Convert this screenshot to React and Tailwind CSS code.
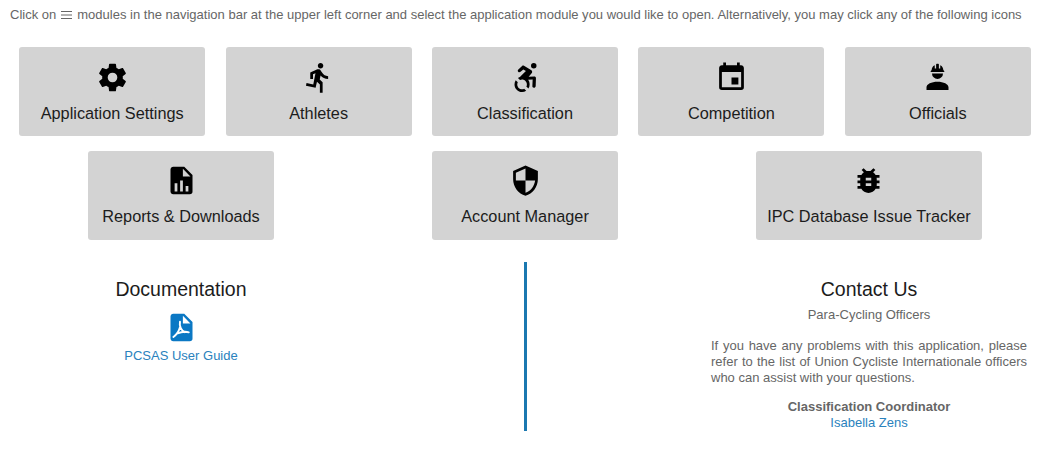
import React from "react";

const icons = {
  cog: "M12,15.5A3.5,3.5 0 0,1 8.5,12A3.5,3.5 0 0,1 12,8.5A3.5,3.5 0 0,1 15.5,12A3.5,3.5 0 0,1 12,15.5M19.43,12.97C19.47,12.65 19.5,12.33 19.5,12C19.5,11.67 19.47,11.34 19.43,11L21.54,9.37C21.73,9.22 21.78,8.95 21.66,8.73L19.66,5.27C19.54,5.05 19.27,4.96 19.05,5.05L16.56,6.05C16.04,5.66 15.5,5.32 14.87,5.07L14.5,2.42C14.46,2.18 14.25,2 14,2H10C9.75,2 9.54,2.18 9.5,2.42L9.13,5.07C8.5,5.32 7.96,5.66 7.44,6.05L4.95,5.05C4.73,4.96 4.46,5.05 4.34,5.27L2.34,8.73C2.21,8.95 2.27,9.22 2.46,9.37L4.57,11C4.53,11.34 4.5,11.67 4.5,12C4.5,12.33 4.53,12.65 4.57,12.97L2.46,14.63C2.27,14.78 2.21,15.05 2.34,15.27L4.34,18.73C4.46,18.95 4.73,19.03 4.95,18.95L7.44,17.94C7.96,18.34 8.5,18.68 9.13,18.93L9.5,21.58C9.54,21.82 9.75,22 10,22H14C14.25,22 14.46,21.82 14.5,21.58L14.87,18.93C15.5,18.67 16.04,18.34 16.56,17.94L19.05,18.95C19.27,19.03 19.54,18.95 19.66,18.73L21.66,15.27C21.78,15.05 21.73,14.78 21.54,14.63L19.43,12.97Z",
  run: "M13.5,5.5C14.59,5.5 15.5,4.58 15.5,3.5C15.5,2.38 14.59,1.5 13.5,1.5C12.39,1.5 11.5,2.38 11.5,3.5C11.5,4.58 12.39,5.5 13.5,5.5M9.89,19.38L10.89,15L13,17V23H15V15.5L12.89,13.5L13.5,10.5C14.79,12 16.79,13 19,13V11C17.09,11 15.5,10 14.69,8.58L13.69,7C13.29,6.38 12.69,6 12,6C11.69,6 11.5,6.08 11.19,6.08L6,8.28V13H8V9.58L9.79,8.88L8.19,17L3.29,16L2.89,18L9.89,19.38Z",
  wheelchair: "M18.4,11.2L14.3,11.4L16.6,8.8C16.8,8.5 16.9,8 16.8,7.5C16.7,7.2 16.6,6.9 16.3,6.7L10.9,3.5C10.5,3.2 9.9,3.3 9.5,3.6L6.8,6.1C6.3,6.6 6.2,7.3 6.7,7.8C7.1,8.3 7.9,8.3 8.4,7.9L10.4,6.1L12.3,7.2L8.1,11.5C8,11.6 8,11.7 7.9,11.7C7.4,11.9 6.9,12.1 6.5,12.4L8,13.9C8.5,13.7 9,13.5 9.5,13.5C11.4,13.5 13,15.1 13,17C13,17.6 12.9,18.1 12.6,18.5L14.1,20C14.7,19.1 15,18.1 15,17C15,15.8 14.6,14.6 13.9,13.7L17.2,13.4L17,18.2C16.9,18.9 17.4,19.4 18.1,19.5H18.2C18.8,19.5 19.3,19 19.4,18.4L19.6,12.5C19.6,12.2 19.5,11.8 19.3,11.6C19,11.3 18.7,11.2 18.4,11.2M18,5.5A2,2 0 0,0 20,3.5A2,2 0 0,0 18,1.5A2,2 0 0,0 16,3.5A2,2 0 0,0 18,5.5M12.5,21.6C11.6,22.2 10.6,22.5 9.5,22.5C6.5,22.5 4,20 4,17C4,15.9 4.3,14.9 4.9,14L6.4,15.5C6.2,16 6,16.5 6,17C6,18.9 7.6,20.5 9.5,20.5C10.1,20.5 10.6,20.4 11,20.1L12.5,21.6Z",
  calendar: "M19,19H5V8H19M16,1V3H8V1H6V3H5C3.89,3 3,3.89 3,5V19A2,2 0 0,0 5,21H19A2,2 0 0,0 21,19V5C21,3.89 20.1,3 19,3H18V1M17,12H12V17H17V12Z",
  hardHat: "M12,15C7.58,15 4,16.79 4,19V21H20V19C20,16.79 16.42,15 12,15M8,9A4,4 0 0,0 12,13A4,4 0 0,0 16,9M11.5,2C11.2,2 11,2.21 11,2.5V5.5H10V3C10,3 7.75,3.86 7.75,6.75C7.75,6.75 7,6.89 7,8H17C16.95,6.89 16.25,6.75 16.25,6.75C16.25,3.86 14,3 14,3V5.5H13V2.5C13,2.21 12.81,2 12.5,2H11.5Z",
  fileChart: "M13,9H18.5L13,3.5V9M6,2H14L20,8V20A2,2 0 0,1 18,22H6C4.89,22 4,21.1 4,20V4C4,2.89 4.89,2 6,2M7,20H9V14H7V20M11,20H13V12H11V20M15,20H17V16H15V20Z",
  shield: "M12,12H19C18.47,16.11 15.72,19.78 12,20.92V12H5V6.3L12,3.19M12,1L3,5V11C3,16.55 6.84,21.73 12,23C17.16,21.73 21,16.55 21,11V5L12,1Z",
  bug: "M14,12H10V10H14M14,16H10V14H14M20,8H17.19C16.74,7.22 16.12,6.55 15.37,6.04L17,4.41L15.59,3L13.42,5.17C12.96,5.06 12.5,5 12,5C11.5,5 11.04,5.06 10.59,5.17L8.41,3L7,4.41L8.62,6.04C7.88,6.55 7.26,7.22 6.81,8H4V10H6.09C6.04,10.33 6,10.66 6,11V12H4V14H6V15C6,15.34 6.04,15.67 6.09,16H4V18H6.81C7.85,19.79 9.78,21 12,21C14.22,21 16.15,19.79 17.19,18H20V16H17.91C17.96,15.67 18,15.34 18,15V14H20V12H18V11C18,10.66 17.96,10.33 17.91,10H20V8Z",
  filePdf: "M13,9H18.5L13,3.5V9M6,2H14L20,8V20A2,2 0 0,1 18,22H6C4.89,22 4,21.1 4,20V4C4,2.89 4.89,2 6,2Z",
};

function Icon({ name, children }) {
  return (
    <svg viewBox="0 0 24 24" className="size-[33px] shrink-0" fill="currentColor" aria-hidden="true">
      <path d={icons[name]} />
      {children}
    </svg>
  );
}

function ModuleCard({ icon, label }) {
  return (
    <div className="flex flex-1 justify-center">
      <button className="flex h-[89px] min-w-[186px] flex-col items-center rounded-[3px] bg-[#d3d3d3] px-[11.3px] pt-[13.5px] text-black">
        <Icon name={icon} />
        <span className="mt-[7px] text-[16.3px] leading-6 whitespace-nowrap text-[#1c1c1c]">{label}</span>
      </button>
    </div>
  );
}

export default function App() {
  return (
    <main className="h-[470px] w-[1050px] overflow-hidden bg-white px-[9px] pt-[7px] font-['Liberation_Sans',Arial,sans-serif] text-[13px] text-[#666]">
      <p className="flex h-4 items-center pl-px leading-4 whitespace-nowrap">
        <span>Click on</span>
        <svg viewBox="0 0 11 8" className="mx-[5px] h-2 w-[11px]" stroke="currentColor" aria-hidden="true">
          <path d="M0 .5H11M0 4H11M0 7.5H11" />
        </svg>
        <span className="tracking-[0.005px]">
          modules in the navigation bar at the upper left corner and select the application module you would like to
          open. Alternatively, you may click any of the following icons
        </span>
      </p>

      <div className="mt-6 flex">
        <ModuleCard icon="cog" label="Application Settings" />
        <ModuleCard icon="run" label="Athletes" />
        <ModuleCard icon="wheelchair" label="Classification" />
        <ModuleCard icon="calendar" label="Competition" />
        <ModuleCard icon="hardHat" label="Officials" />
      </div>
      <div className="mt-[14.6px] flex">
        <ModuleCard icon="fileChart" label="Reports & Downloads" />
        <ModuleCard icon="shield" label="Account Manager" />
        <ModuleCard icon="bug" label="IPC Database Issue Tracker" />
      </div>

      <div className="mt-[22.4px] grid grid-cols-3">
        <section className="flex flex-col items-center pt-[15px]">
          <h2 className="text-[19.5px] leading-6 text-[#1c1c1c]">Documentation</h2>
          <a className="flex flex-col items-center text-[#0b78c4]" href="#guide">
            <span className="mt-[10px]">
              <Icon name="filePdf">
                <path
                  d="M10.9 7.8C10.2 11.2 12 14.4 14.3 15.4M11 11.5C10.2 14.5 8.4 17.3 6.1 18.9M8.6 16.5C11 15.5 14.8 14.7 17.3 15.5"
                  fill="none"
                  stroke="white"
                  strokeWidth="1.4"
                  strokeLinecap="round"
                />
              </Icon>
            </span>
            <span className="mt-[4px] leading-4 text-[#2a82bd]">PCSAS User Guide</span>
          </a>
        </section>
        <div className="flex justify-center">
          <div className="h-[169px] w-[3px] bg-[#1b78b0]" />
        </div>
        <section className="flex flex-col items-center pt-[15px] leading-4">
          <h2 className="text-[19.5px] leading-6 text-[#1c1c1c]">Contact Us</h2>
          <p className="mt-[6px]">Para-Cycling Officers</p>
          <p className="mt-[15px] w-[316px] text-justify">
            If you have any problems with this application, please refer to the list of Union Cycliste Internationale
            officers who can assist with your questions.
          </p>
          <p className="mt-[13px] font-bold">Classification Coordinator</p>
          <a className="text-[#2a82bd]" href="#contact">Isabella Zens</a>
        </section>
      </div>
    </main>
  );
}
